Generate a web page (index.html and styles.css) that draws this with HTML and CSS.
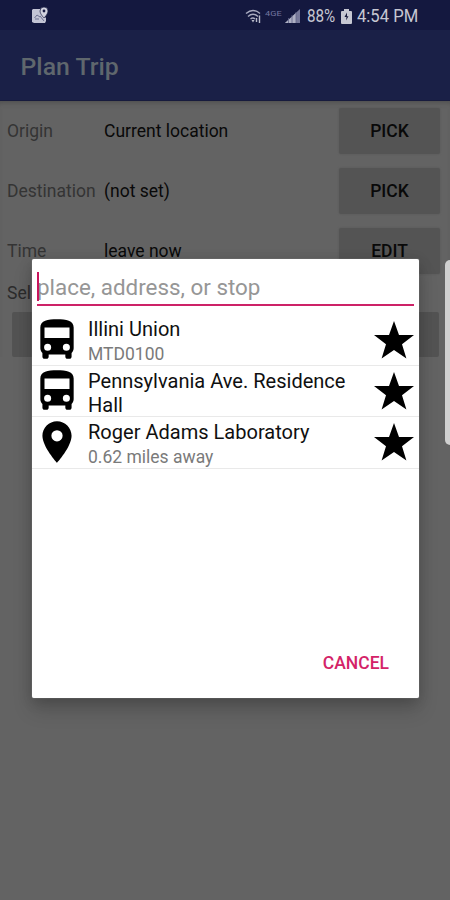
FILE: index.html
```html
<!DOCTYPE html>
<html lang="en">
<head>
<meta charset="utf-8">
<title>Plan Trip</title>
<link rel="stylesheet" href="styles.css">
</head>
<body>
<svg class="defs" width="0" height="0">
  <symbol id="bus" viewBox="0 0 24 24"><path fill-rule="evenodd" d="M4 16c0 .88.39 1.67 1 2.22V20c0 .55.45 1 1 1h1c.55 0 1-.45 1-1v-1h8v1c0 .55.45 1 1 1h1c.55 0 1-.45 1-1v-1.78c.61-.55 1-1.34 1-2.22V6c0-3.5-3.58-4-8-4s-8 .5-8 4v10zM7.500 13.800a1.700 1.700 0 1 0 0 3.400a1.700 1.700 0 1 0 0-3.400zM16.500 13.800a1.700 1.700 0 1 0 0 3.400a1.700 1.700 0 1 0 0-3.400zM18 11H6V6h12z"/></symbol>
  <symbol id="pin" viewBox="0 0 24 24"><path d="M12 2C8.130 2 5 5.130 5 9c0 5.250 7 13 7 13s7-7.750 7-13c0-3.870-3.130-7-7-7zm0 9.700a2.700 2.700 0 1 1 0-5.400 2.700 2.700 0 0 1 0 5.400z"/></symbol>
  <symbol id="star" viewBox="0 0 40 38"><path d="M20 0L25 14H40L28 23.300L32.400 37.500L20 29L7.600 37.500L12 23.300L0 14H15Z"/></symbol>
</svg>
<div class="screen">
  <header class="status">
    <svg class="map-icon" width="18" height="18" viewBox="0 0 18 18">
      <path d="M2 3h9l-1 3 4 6 1-1v4l-1 2H3l-2-1V4z" fill="#c3c4d4"/>
      <path d="M3.500 12l2.500-3 3 2M4 13h4M9 10l4 5" stroke="#6d7090" fill="none"/>
      <path d="M13 1a4 4 0 0 0-4 4c0 3 4 7 4 7s4-4 4-7a4 4 0 0 0-4-4z" fill="#d2d3de" stroke="#191c42" stroke-width=".7"/>
      <circle cx="13" cy="5" r="1.400" fill="#191c42"/>
    </svg>
    <div class="status-right">
      <svg class="wifi" width="17" height="15" viewBox="0 0 17 15" fill="none" stroke="#a9abc0" stroke-width="1.400">
        <path d="M1 4.500Q8-1.500 15 4.500M3 7.500Q8 3 13 7.500M5.500 10Q8 8 10 10"/><path d="M11.500 13V9M14.500 14V6.500" stroke="#babbcb"/><path d="M6.500 11h3L8 13.500z" fill="#babbcb" stroke="none"/>
      </svg>
      <span class="carrier">4GE</span>
      <svg class="signal" width="15" height="14" viewBox="0 0 15 14"><path d="M0 14L15 0V14Z" fill="#77799a"/><path d="M0 14L11 4V14Z" fill="#aeb0c3"/><path d="M3.500 9v5M7 6v8M11 3v11" stroke="#5f6286" stroke-width=".8"/></svg>
      <span class="percent">88%</span>
      <svg class="battery" width="11" height="15" viewBox="0 0 11 15"><path d="M3 0h5v2h2q1 0 1 1v11q0 1-1 1H1q-1 0-1-1V3q0-1 1-1h2z" fill="#c6c7d2"/><path d="M6 3.500L3.500 8h2L5 11.500 7.500 7.200H6z" fill="#171a3c"/></svg>
      <span class="clock">4:54 PM</span>
    </div>
  </header>
  <div class="appbar"><h1>Plan Trip</h1></div>
  <main class="form">
    <div class="field"><span class="label">Origin</span><span class="value">Current location</span><button class="btn">PICK</button></div>
    <div class="field"><span class="label">Destination</span><span class="value">(not set)</span><button class="btn">PICK</button></div>
    <div class="field"><span class="label">Time</span><span class="value">leave now</span><button class="btn">EDIT</button></div>
    <div class="select-label">Sel</div>
    <div class="wide-btn"></div>
  </main>
  <div class="edge-handle"></div>
  <section class="dialog">
    <div class="search"><span class="caret"></span>place, address, or stop</div>
    <ul class="list">
      <li class="row"><svg class="kind"><use href="#bus"/></svg><div class="text"><div class="name">Illini Union</div><div class="sub">MTD0100</div></div><svg class="star"><use href="#star"/></svg></li>
      <li class="row"><svg class="kind"><use href="#bus"/></svg><div class="text"><div class="name">Pennsylvania Ave. Residence Hall</div></div><svg class="star"><use href="#star"/></svg></li>
      <li class="row"><svg class="kind"><use href="#pin"/></svg><div class="text"><div class="name">Roger Adams Laboratory</div><div class="sub">0.62 miles away</div></div><svg class="star"><use href="#star"/></svg></li>
    </ul>
    <button class="cancel">CANCEL</button>
  </section>
</div>
</body>
</html>
```
FILE: styles.css
```css
* { box-sizing: border-box; }
body { margin: 0; font-family: Roboto, "Liberation Sans", sans-serif; }
.defs { position: absolute; }
button { font: inherit; border: 0; padding: 0; }
.screen { position: relative; width: 450px; height: 900px; overflow: hidden; background: #636363; }
.status { height: 30px; background: #14183f; display: flex; justify-content: space-between; align-items: center; padding: 0 32px 0 31px; }
.map-icon { margin-top: -1px; }
.status-right { display: flex; align-items: center; color: #c6c7d2; font-size: 17.5px; height: 30px; padding-top: 2px; white-space: nowrap; }
.carrier { font-size: 8px; color: #7376a0; width: 18px; margin: -6px 2px 0 3px; transform: scaleX(1.15); transform-origin: left; }
.signal { margin-right: 7px; }
.percent { width: 30px; transform: scaleX(.87); transform-origin: left; }
.battery { margin: 0 5px 0 4px; }
.clock { width: 61px; transform: scaleX(.95); transform-origin: left; }
.appbar { height: 71px; background: #1a2047; display: flex; align-items: center; padding: 2px 0 0 20.5px; border-bottom: 1px solid #171b3d; }
.appbar h1 { margin: 0; font-size: 24.8px; font-weight: 500; color: #5f676d; }
.form { box-shadow: inset 0 5px 5px -3px #505050; }
.field { display: flex; align-items: center; height: 60px; padding: 0 10px 0 7px; font-size: 17.5px; }
.label { width: 97px; color: #343434; }
.value { flex: 1; color: #090909; }
.btn { width: 101px; height: 46px; border-radius: 2px; background: #545454; color: #090909; font-weight: 500; box-shadow: 0 0 2px #565656; }
.select-label { height: 29px; padding: 2px 0 0 7px; font-size: 17.5px; color: #2b2b2b; }
.wide-btn { height: 45px; margin: 2px 11px 0 12px; border-radius: 2px; background: #535353; }
.edge-handle { position: absolute; left: 445px; top: 260px; width: 10px; height: 185px; border-radius: 5px; background: #d0d0d0; }
.dialog { position: absolute; left: 32px; top: 258.5px; width: 387px; height: 439px; background: #fff; border-radius: 2px; box-shadow: 0 0 1px #bbb, 0 12px 20px rgba(0,0,0,.16), 0 3px 14px rgba(0,0,0,.16); display: flex; flex-direction: column; }
.search { position: relative; margin: 0 5px; height: 47.5px; border-bottom: 2px solid #cd2267; font-size: 22.4px; line-height: 56px; color: #969696; }
.caret { position: absolute; left: 0; top: 13px; width: 2px; height: 29px; background: #c9165d; }
.list { list-style: none; margin: 9px 0 0; padding: 0; }
.row { display: flex; height: 51.2px; padding-right: 5px; border-bottom: 1px solid #e9e9e9; }
.kind { width: 50px; height: 50px; flex: none; }
.text { flex: 1; padding: 2.4px 0 0 6px; }
.name { font-size: 20.05px; line-height: 24px; color: #101010; }
.sub { font-size: 17.5px; line-height: 24px; color: #7a7a7a; padding-top: 1px; }
.star { width: 40px; height: 38px; flex: none; margin-top: 6px; }
.cancel { align-self: flex-end; margin: auto 30px 24px 0; background: none; color: #d42368; font-size: 17.5px; font-weight: 500; line-height: 21px; }
```
